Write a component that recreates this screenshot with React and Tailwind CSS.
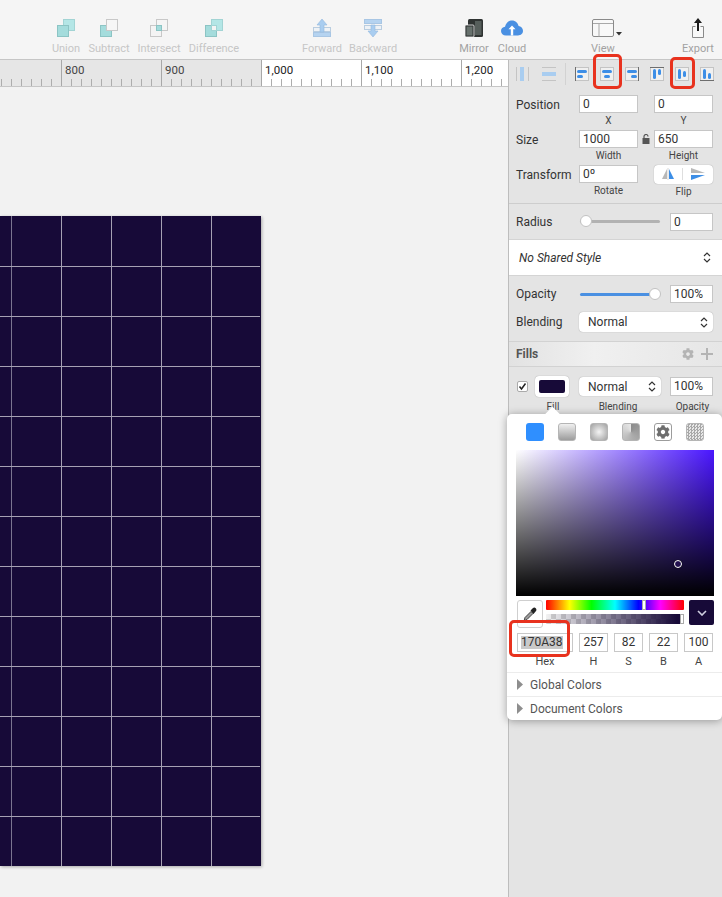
import React from "react";
import { FaCog } from "react-icons/fa";

const F = "font-['Roboto','Inter',sans-serif]";

function Tool({ w, ml, label, color, children }) {
  return (
    <div className={`flex flex-col items-center shrink-0 ${w} ${ml}`}>
      <div className="h-[20px] mt-[18px] flex items-center justify-center">{children}</div>
      <div className={`mt-[4px] text-[11px] leading-[13px] whitespace-nowrap ${color}`}>{label}</div>
    </div>
  );
}

const Union = () => (
  <svg width="18" height="18" viewBox="0 0 18 18">
    <rect x="6.5" y="0.5" width="11" height="11" fill="#b4e6e6" stroke="#a2d4d4" />
    <rect x="0.5" y="6.5" width="11" height="11" fill="#a4dcdc" stroke="#8cc4c4" />
  </svg>
);
const Subtract = () => (
  <svg width="18" height="18" viewBox="0 0 18 18">
    <rect x="0.5" y="6.5" width="11" height="11" fill="#a4dcdc" stroke="#8cc4c4" />
    <rect x="6.5" y="0.5" width="11" height="11" fill="#f6f6f6" stroke="#c8c8c8" />
  </svg>
);
const Intersect = () => (
  <svg width="18" height="18" viewBox="0 0 18 18">
    <rect x="0.5" y="6.5" width="11" height="11" fill="#f4f4f4" stroke="#c8c8c8" />
    <rect x="6.5" y="0.5" width="11" height="11" fill="none" stroke="#c8c8c8" />
    <rect x="6.5" y="6.5" width="5" height="5" fill="#a4dcdc" stroke="#8cc4c4" />
  </svg>
);
const Difference = () => (
  <svg width="18" height="18" viewBox="0 0 18 18">
    <rect x="6.5" y="0.5" width="11" height="11" fill="#b4e6e6" stroke="#a2d4d4" />
    <rect x="0.5" y="6.5" width="11" height="11" fill="#a4dcdc" stroke="#8cc4c4" />
    <rect x="6.5" y="6.5" width="5" height="5" fill="#f4f4f4" stroke="#a2d4d4" />
  </svg>
);
const Forward = () => (
  <svg width="18" height="18" viewBox="0 0 18 18">
    <rect x="0.5" y="8.5" width="17" height="4" fill="#eef2f6" stroke="#b9cde0" />
    <rect x="0.5" y="13.5" width="17" height="4" fill="#b5d3f0" stroke="#a8c6e4" />
    <path d="M9 0 L14 6 H11 V13 H7 V6 H4 Z" fill="#a9cdf0" stroke="#94b9de" strokeWidth="0.6" />
  </svg>
);
const Backward = () => (
  <svg width="18" height="18" viewBox="0 0 18 18">
    <rect x="0.5" y="0.5" width="17" height="4" fill="#b5d3f0" stroke="#a8c6e4" />
    <rect x="0.5" y="6.5" width="17" height="4" fill="#eef2f6" stroke="#b9cde0" />
    <path d="M9 18 L14 12 H11 V6 H7 V12 H4 Z" fill="#a9cdf0" stroke="#94b9de" strokeWidth="0.6" />
  </svg>
);
const Mirror = () => (
  <svg width="18" height="18" viewBox="0 0 18 18">
    <rect x="3" y="0" width="15" height="18" rx="1.5" fill="#2f3332" />
    <rect x="0" y="6" width="9" height="12" rx="1" fill="#2f3332" stroke="#f5f5f5" strokeWidth="0.8" />
    <rect x="1.5" y="7.5" width="6" height="9" fill="#67716d" />
    <rect x="10" y="2" width="6.5" height="14" fill="#565e5b" />
  </svg>
);
const Cloud = () => (
  <svg width="22" height="16" viewBox="0 0 22 16">
    <path d="M5 15.5 C2 15.5 0 13.5 0 11 C0 8.6 1.8 7 4 6.8 C4.8 3 7.8 0.5 11 0.5 C14.6 0.5 17 3 17.6 6 C20 6.2 22 8 22 10.8 C22 13.5 20 15.5 17 15.5 Z" fill="#4a90e2" />
    <path d="M11 5.5 L14.5 9.2 H12.2 V15.5 H9.8 V9.2 H7.5 Z" fill="#fff" />
  </svg>
);
const View = () => (
  <svg width="31" height="18" viewBox="0 0 31 18">
    <rect x="0.5" y="0.5" width="21" height="17" rx="1.5" fill="#f8f8f8" stroke="#8a8a8a" />
    <path d="M1 4.5 H21 M7 4.5 V17.5" stroke="#a8a8a8" fill="none" />
    <path d="M24 13 H30 L27 16.5 Z" fill="#333" />
  </svg>
);
const Export = () => (
  <svg width="12" height="20" viewBox="0 0 12 20">
    <path d="M3.5 8.5 H0.5 V19.5 H11.5 V8.5 H8.5" fill="#f8f8f8" stroke="#8a8a8a" />
    <path d="M6 0 L10 5 H7 V13 H5 V5 H2 Z" fill="#1c1c1c" />
  </svg>
);

function Toolbar() {
  const off = "text-[#c6c6c6]";
  const on = "text-[#a2a2a2]";
  return (
    <div className={`flex h-[59px] bg-[#f5f5f5] shrink-0 ${F}`}>
      <Tool w="w-[40px]" ml="ml-[46px]" label="Union" color={off}><Union /></Tool>
      <Tool w="w-[46px]" label="Subtract" color={off}><Subtract /></Tool>
      <Tool w="w-[54px]" label="Intersect" color={off}><Intersect /></Tool>
      <Tool w="w-[56px]" label="Difference" color={off}><Difference /></Tool>
      <Tool w="w-[50px]" ml="ml-[55px]" label="Forward" color={off}><Forward /></Tool>
      <Tool w="w-[52px]" label="Backward" color={off}><Backward /></Tool>
      <Tool w="w-[40px]" ml="ml-[55px]" label="Mirror" color={on}><Mirror /></Tool>
      <Tool w="w-[36px]" label="Cloud" color={on}><Cloud /></Tool>
      <Tool w="w-[40px]" ml="ml-[53px]" label="View" color={on}><div className="ml-[8px]"><View /></div></Tool>
      <Tool w="w-[40px]" ml="ml-[55px]" label="Export" color={on}><Export /></Tool>
    </div>
  );
}

function Seg({ w, label, bg, ticks, line = true, color = "text-[#444]", pr = "" }) {
  return (
    <div className={`flex flex-col h-full shrink-0 overflow-hidden ${w} ${bg} ${line ? "border-l border-[#a8a8a8]" : ""}`}>
      <div className={`h-[19px] pl-[3px] pt-[3px] text-[11.5px] leading-[14px] ${color}`}>{label}</div>
      <div className={`flex h-[7px] ${pr}`}>
        {Array.from({ length: ticks }).map((_, i) => (
          <div key={i} className="w-[10px] shrink-0 border-r border-[#adadad]" />
        ))}
      </div>
    </div>
  );
}

function Ruler() {
  return (
    <div className={`flex h-[27px] shrink-0 border-b border-[#c6c6c6] ${F}`}>
      <Seg w="w-[61px]" bg="bg-[#e6e6e6]" ticks={6} line={false} pr="justify-end pr-[9px]" />
      <Seg w="w-[100px]" bg="bg-[#e6e6e6]" label="800" ticks={9} />
      <Seg w="w-[100px]" bg="bg-[#e6e6e6]" label="900" ticks={9} />
      <Seg w="w-[100px]" bg="bg-white" label="1,000" ticks={9} color="text-[#222]" />
      <Seg w="w-[100px]" bg="bg-white" label="1,100" ticks={9} color="text-[#222]" />
      <Seg w="w-[47px]" bg="bg-white" label="1,200" ticks={4} color="text-[#222]" />
    </div>
  );
}

function Artboard() {
  const rows = Array.from({ length: 13 });
  const cells = Array.from({ length: 5 });
  return (
    <div className="w-[261px] h-[650px] mt-[129px] bg-[#170a38] shadow-[1px_1px_3px_rgba(0,0,0,0.3)] pr-[1px] flex flex-col shrink-0">
      {rows.map((_, r) => (
        <div
          key={r}
          className={`flex w-[260px] ${r === 0 ? "h-[51px]" : r === 12 ? "h-[49px]" : "h-[50px]"} ${r === 12 ? "" : "border-b border-[#a6a1b3]"}`}
        >
          <div className="w-[12px] h-full border-r border-[#7b7590]" />
          {cells.map((_, c) => (
            <div key={c} className={`h-full ${c === 4 ? "w-[48px]" : "w-[50px] border-r border-[#a6a1b3]"}`} />
          ))}
        </div>
      ))}
    </div>
  );
}

function AlignRow() {
  const b = "#3d8ee6";
  const box = (edge, inner, key) => (
    <svg key={key} width="14" height="14" viewBox="0 0 14 14" className="shrink-0">
      <rect x="0.5" y="0.5" width="13" height="13" fill="#f0f0f0" stroke="#c4c4c4" />
      {edge && <path d={edge} stroke="#6e6e6e" fill="none" />}
      {inner}
    </svg>
  );
  return (
    <div className="flex items-center h-[27px] shrink-0 pl-[7px]">
      <svg width="13" height="14" viewBox="0 0 13 14" className="shrink-0">
        <path d="M0.5 0 V14 M12.5 0 V14" stroke="#c4c4c4" />
        <rect x="4" y="0" width="4" height="14" fill="#a9cdf0" />
      </svg>
      <svg width="14" height="14" viewBox="0 0 14 14" className="shrink-0 ml-[13px]">
        <path d="M0 0.5 H14 M0 13.5 H14" stroke="#c4c4c4" />
        <rect x="0" y="5" width="14" height="4" fill="#a9cdf0" />
      </svg>
      <div className="w-px h-[22px] bg-[#d2d2d2] ml-[9px] mr-[9px]" />
      <div className="flex gap-[11px]">
        {box("M0.5 0 V14", <><rect x="2" y="3" width="10" height="3" rx="1.5" fill={b} /><rect x="2" y="8" width="6" height="3" rx="1.5" fill={b} /></>, 1)}
        {box(null, <><rect x="2" y="3" width="10" height="3" rx="1.5" fill={b} /><rect x="4" y="8" width="6" height="3" rx="1.5" fill={b} /></>, 2)}
        {box("M13.5 0 V14", <><rect x="2" y="3" width="10" height="3" rx="1.5" fill={b} /><rect x="6" y="8" width="6" height="3" rx="1.5" fill={b} /></>, 3)}
        {box("M0 0.5 H14", <><rect x="3" y="2" width="3" height="10" rx="1.5" fill={b} /><rect x="8" y="2" width="3" height="6" rx="1.5" fill={b} /></>, 4)}
        {box(null, <><rect x="3" y="2" width="3" height="10" rx="1.5" fill={b} /><rect x="8" y="4" width="3" height="6" rx="1.5" fill={b} /></>, 5)}
        {box("M0 13.5 H14", <><rect x="3" y="2" width="3" height="10" rx="1.5" fill={b} /><rect x="8" y="6" width="3" height="6" rx="1.5" fill={b} /></>, 6)}
      </div>
    </div>
  );
}

function Field({ w, children, h = "h-[18px]" }) {
  return (
    <div className={`${w} ${h} shrink-0 border border-[#c6c6c6] bg-white px-[3px] pt-[1px] text-[12px] leading-[15px] text-[#333]`}>
      {children}
    </div>
  );
}
const Chev = ({ c = "#333" }) => (
  <svg width="8" height="13" viewBox="0 0 8 13">
    <path d="M1 5 L4 2 L7 5 M1 8 L4 11 L7 8" fill="none" stroke={c} strokeWidth="1.2" />
  </svg>
);
function Select({ w, h = "h-[20px]", label }) {
  return (
    <div className={`${w} ${h} shrink-0 bg-white rounded-[4px] shadow-[0_0_1px_rgba(0,0,0,0.4)] flex items-center justify-between pl-[9px] pr-[5px] text-[12px] text-[#333]`}>
      <span>{label}</span>
      <Chev />
    </div>
  );
}
const Sub = ({ w, children, cls = "" }) => (
  <div className={`${w} text-center text-[10px] leading-[12px] text-[#444] ${cls}`}>{children}</div>
);

function PropRow({ label, a, b, subA, subB, mid, subCls }) {
  return (
    <div className="h-[35px] flex flex-col">
      <div className="flex items-center h-[18px]">
        <div className="w-[63px] pt-[2px] text-[12px] leading-[16px] text-[#333]">{label}</div>
        <Field w="w-[59px]">{a}</Field>
        <div className="w-[16px] flex justify-center">{mid}</div>
        {b}
      </div>
      <div className="flex pl-[63px] mt-[2px]">
        <Sub w="w-[59px]">{subA}</Sub>
        <div className="w-[16px]" />
        <Sub w="w-[59px]" cls={subCls}>{subB}</Sub>
      </div>
    </div>
  );
}

function Slider({ fill, thumbCls }) {
  return (
    <div className="relative w-[80px] h-[3px] rounded-full shrink-0" style={{ background: fill }}>
      <div className={`absolute top-[-5px] w-[12px] h-[12px] rounded-full bg-white border border-[#c2c2c2] ${thumbCls}`} />
    </div>
  );
}

function Panel() {
  return (
    <div className={`w-[214px] shrink-0 bg-[#e4e4e4] border-l border-[#bdbdbd] flex flex-col ${F}`}>
      <AlignRow />
      <div className="pt-[8px] pl-[7px] pr-[8px]">
        <PropRow label="Position" a="0" subA="X" subB="Y" b={<Field w="w-[59px]">0</Field>} />
        <PropRow
          label="Size"
          a="1000"
          subA="Width"
          subB="Height"
          mid={
            <svg width="8" height="10" viewBox="0 0 8 10">
              <rect x="0.5" y="4" width="7" height="6" fill="#555" />
              <path d="M2 4 V2.5 A2 2 0 0 1 6 2.5" fill="none" stroke="#555" strokeWidth="1.2" />
            </svg>
          }
          b={<Field w="w-[59px]">650</Field>}
        />
        <PropRow
          label="Transform"
          a="0º"
          subA="Rotate"
          subB="Flip"
          subCls="mt-[1px]"
          b={
            <div className="w-[59px] h-[19px] shrink-0 bg-white rounded-[4px] shadow-[0_0_1px_rgba(0,0,0,0.4)] flex items-center">
              <div className="w-[29px] flex justify-center border-r border-[#dedede]">
                <svg width="14" height="12" viewBox="0 0 14 12">
                  <path d="M6 1 V11 H1 Z" fill="#b8b8b8" />
                  <path d="M7 0 V12" stroke="#b8b8b8" strokeWidth="0.6" />
                  <path d="M8 1 V11 H13 Z" fill="#3d8ee6" />
                </svg>
              </div>
              <div className="flex-1 flex justify-center">
                <svg width="16" height="12" viewBox="0 0 16 12">
                  <path d="M1 0 L15 5 H1 Z" fill="#b8b8b8" />
                  <path d="M1 7 H15 L1 12 Z" fill="#3d8ee6" />
                </svg>
              </div>
            </div>
          }
        />
      </div>
      <div className="h-[2px] mt-[2px] border-b border-[#cdcdcd]" />
      <div className="flex items-center h-[35px] pl-[7px] pr-[8px]">
        <div className="w-[64px] text-[12px] text-[#333]">Radius</div>
        <Slider fill="#b2b2b2" thumbCls="left-0" />
        <div className="ml-[10px]"><Field w="w-[43px]">0</Field></div>
      </div>
      <div className="h-[37px] bg-white border-y border-[#d4d4d4] flex items-center justify-between pl-[10px] pr-[11px] text-[12px] italic text-[#333]">
        <span>No Shared Style</span>
        <span className="not-italic"><Chev /></span>
      </div>
      <div className="flex items-center h-[18px] mt-[9px] pl-[7px] pr-[8px]">
        <div className="w-[64px] text-[12px] text-[#333]">Opacity</div>
        <Slider fill="#4a90e2" thumbCls="right-0 translate-x-[1px]" />
        <div className="ml-[10px]"><Field w="w-[43px]">100%</Field></div>
      </div>
      <div className="flex items-center h-[20px] mt-[9px] pl-[7px] pr-[8px]">
        <div className="w-[63px] text-[12px] text-[#333]">Blending</div>
        <Select w="w-[134px]" label="Normal" />
      </div>
      <div className="h-[26px] mt-[9px] border-y border-[#d2d2d2] bg-[linear-gradient(90deg,#e2e2e2,#f0f0f0_40%,#e6e6e6)] flex items-center pl-[7px] pr-[9px]">
        <span className="text-[12px] font-bold text-[#555]">Fills</span>
        <FaCog className="ml-auto text-[#b4b4b4] w-[12px] h-[12px]" />
        <svg width="12" height="12" viewBox="0 0 12 12" className="ml-[7px]">
          <path d="M6 0 V12 M0 6 H12" stroke="#b4b4b4" strokeWidth="2" />
        </svg>
      </div>
      <div className="flex items-center h-[21px] mt-[9px] pl-[8px] pr-[8px]">
        <div className="w-[11px] h-[11px] shrink-0 bg-white rounded-[2px] border border-[#aaa] flex items-center justify-center">
          <svg width="9" height="9" viewBox="0 0 9 9"><path d="M1.5 4.5 L3.5 7 L7.5 1.5" fill="none" stroke="#222" strokeWidth="1.5" /></svg>
        </div>
        <div className="w-[34px] h-[21px] ml-[7px] shrink-0 bg-white rounded-[4px] shadow-[0_0_1px_rgba(0,0,0,0.4)] flex items-center justify-center">
          <div className="w-[26px] h-[13px] rounded-[2px] bg-[#170a38]" />
        </div>
        <div className="ml-[10px]"><Select w="w-[82px]" h="h-[19px]" label="Normal" /></div>
        <div className="ml-[9px]"><Field w="w-[43px]" h="h-[19px]">100%</Field></div>
      </div>
      <div className="flex mt-[4px] pl-[27px] text-[10px] leading-[12px] text-[#444]">
        <div className="w-[34px] text-center">Fill</div>
        <div className="w-[82px] ml-[7px] text-center">Blending</div>
        <div className="w-[43px] ml-[12px] text-center">Opacity</div>
      </div>
    </div>
  );
}

function TabIcons() {
  const base = "w-[18px] h-[18px] rounded-[3px] shrink-0";
  return (
    <div className="flex gap-[14px] pl-[19px] pt-[9px]">
      <div className={`${base} bg-[#2f8fff]`} />
      <div className={`${base} border border-[#b5b5b5] bg-[linear-gradient(180deg,#f0f0f0,#9c9c9c)]`} />
      <div className={`${base} border border-[#b5b5b5] bg-[radial-gradient(circle,#f4f4f4,#a0a0a0)]`} />
      <div className={`${base} border border-[#b5b5b5] bg-[conic-gradient(#8c8c8c,#b0b0b0_180deg,#e8e8e8_359deg)]`} />
      <div className={`${base} border border-[#9c9c9c] bg-white flex items-center justify-center`}>
        <FaCog className="w-[14px] h-[14px] text-[#6e6e6e]" />
      </div>
      <div className={`${base} border border-[#b5b5b5] bg-[repeating-conic-gradient(#a8a8a8_0_25%,#e8e8e8_0_50%)] bg-[length:3px_3px]`} />
    </div>
  );
}

function Popover() {
  return (
    <div className={`absolute left-[507px] top-[414px] w-[215px] h-[306px] bg-white rounded-[5px] shadow-[0_1px_8px_rgba(0,0,0,0.35)] ${F}`}>
      <div className="absolute left-[40px] top-[-5px] w-[11px] h-[11px] rotate-45 bg-white" />
      <div className="relative"><TabIcons /></div>
      <div className="relative w-[198px] h-[146px] ml-[9px] mt-[9px] bg-[linear-gradient(180deg,rgba(0,0,0,0),#000),linear-gradient(90deg,#fff,#4a16ff)]">
        <div className="absolute left-[158px] top-[110px] w-[8px] h-[8px] rounded-full border border-white bg-[#22104f] shadow-[0_0_1px_#000]" />
      </div>
      <div className="flex mt-[4px] pl-[10px]">
        <div className="w-[26px] h-[28px] shrink-0 bg-white rounded-[3px] border border-[#cfcfcf] flex items-center justify-center -mb-[6px]">
          <svg width="14" height="15" viewBox="0 0 14 15">
            <path d="M1 14 L2 10.5 L8 4.5 L10 6.5 L4 12.5 Z" fill="#9c9c9c" stroke="#333" strokeWidth="0.9" />
            <path d="M7.5 3.5 L10 1 Q11.5 0 13 1.5 Q14 3 13 4 L10.5 7 Z" fill="#222" />
          </svg>
        </div>
        <div className="ml-[3px] w-[138px] shrink-0 flex flex-col gap-[4px]">
          <div className="relative h-[10px] rounded-[1px] bg-[linear-gradient(90deg,#ff0000,#ffff00_17%,#00ff00_33%,#00ffff_50%,#0000ff_67%,#ff00ff_83%,#ff0000)]">
            <div className="absolute left-[96px] top-0 w-[4px] h-[10px] bg-white border border-[#aaa]" />
          </div>
          <div className="relative h-[10px] rounded-[1px] bg-[linear-gradient(90deg,rgba(23,10,56,0),#170a38_95%),repeating-conic-gradient(#cfcfcf_0_25%,#f2f2f2_0_50%)] bg-[length:100%_100%,10px_10px]">
            <div className="absolute right-0 top-0 w-[4px] h-[10px] bg-white border border-[#aaa]" />
          </div>
        </div>
        <div className="ml-[5px] w-[25px] h-[25px] shrink-0 bg-[#170a38] rounded-[2px] flex items-center justify-center">
          <svg width="10" height="6" viewBox="0 0 10 6"><path d="M1 1 L5 5 L9 1" fill="none" stroke="#cfcfe0" strokeWidth="1.6" /></svg>
        </div>
      </div>
      <div className="flex mt-[8px] pl-[10px] gap-[6px] text-[12px] text-[#333]">
        {[["170A38", "w-[56px]", "Hex"], ["257", "w-[29px]", "H"], ["82", "w-[29px]", "S"], ["22", "w-[29px]", "B"], ["100", "w-[29px]", "A"]].map(([v, w, l], i) => (
          <div key={l} className={`${w} flex flex-col items-center`}>
            <div className="w-full h-[19px] border border-[#c8c8c8] flex items-center pl-[3px]">
              <span className={i === 0 ? "bg-[#c9c9c9] leading-[13px]" : "leading-[13px] w-full text-center pr-[3px]"}>{v}</span>
            </div>
            <div className="text-[11px] leading-[14px] mt-[3px] text-[#444]">{l}</div>
          </div>
        ))}
      </div>
      <div className="mt-[3px] border-t border-[#ececec] h-[24px] flex items-center pl-[10px] text-[12px] text-[#555]">
        <svg width="6" height="11" viewBox="0 0 6 11"><path d="M0 0 L6 5.5 L0 11 Z" fill="#8e8e8e" /></svg>
        <span className="ml-[7px]">Global Colors</span>
      </div>
      <div className="border-t border-[#ececec] h-[24px] flex items-center pl-[10px] text-[12px] text-[#555]">
        <svg width="6" height="11" viewBox="0 0 6 11"><path d="M0 0 L6 5.5 L0 11 Z" fill="#8e8e8e" /></svg>
        <span className="ml-[7px]">Document Colors</span>
      </div>
    </div>
  );
}

const Red = ({ cls }) => (
  <div className={`absolute border-[3px] border-[#e8321e] rounded-[5px] ${cls}`} />
);

export default function App() {
  return (
    <div className="relative w-[722px] h-[897px] overflow-hidden bg-[#f2f2f2] flex flex-col">
      <Toolbar />
      <div className="flex flex-1 min-h-0 border-t border-[#c6c6c6]">
        <div className="w-[508px] shrink-0 flex flex-col overflow-hidden">
          <Ruler />
          <Artboard />
        </div>
        <Panel />
      </div>
      <Popover />
      <Red cls="left-[593px] top-[54px] w-[29px] h-[35px]" />
      <Red cls="left-[670px] top-[57px] w-[25px] h-[32px]" />
      <Red cls="left-[509px] top-[620px] w-[61px] h-[37px]" />
    </div>
  );
}
